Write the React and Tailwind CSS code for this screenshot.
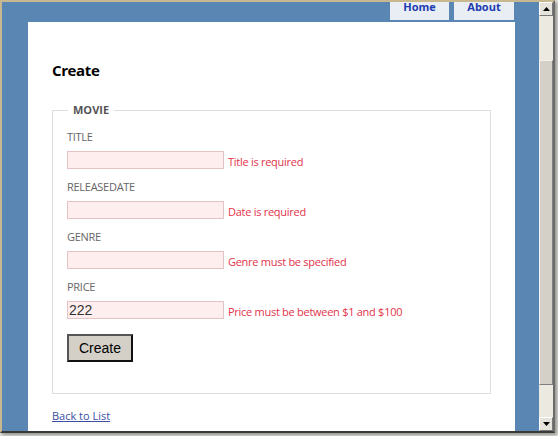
import React from 'react';

const font = { fontFamily: '"Open Sans", "DejaVu Sans", sans-serif' };

function Field({ label, value, error }) {
  return (
    <div className="mb-[11px]">
      <div className="text-[11px] leading-[14px] text-[#666] tracking-tight">{label}</div>
      <div className="mt-[7px] flex items-center">
        <input
          readOnly
          value={value || ''}
          className="w-[157px] h-[18px] border border-[#e3c3c3] bg-[#ffeeee] px-[1px] text-[14px] leading-[16px] text-[#333] outline-none"
          style={{ fontFamily: '"Liberation Sans", Arial, sans-serif' }}
        />
        <span className="ml-[4px] mt-[3px] text-[11px] leading-[14px] font-medium text-[#e2334a] tracking-tight">{error}</span>
      </div>
    </div>
  );
}

export default function App() {
  return (
    <div className="w-[558px] h-[436px] bg-[#e4e2dd] overflow-hidden" style={font}>
      <div className="w-[555px] h-[433px] flex border-t-2 border-l-2 border-[#c7b88f] border-r-2 border-r-[#6b6b6b] border-b-2 border-b-[#3a3a3a] shadow-[2px_2px_3px_rgba(0,0,0,0.35)]">
        {/* page */}
        <div className="flex-1 bg-[#5a86b4] pl-[26px] pr-[24px] flex flex-col">
          <div className="h-[20px] flex justify-end gap-[5px]">
            <div className="w-[59px] h-[18px] bg-[#e8eef4] text-[#1d3bb0] text-[11px] font-bold flex items-start justify-center leading-[9px]">Home</div>
            <div className="w-[60px] h-[18px] bg-[#e8eef4] text-[#1d3bb0] text-[11px] font-bold flex items-start justify-center leading-[9px] mr-[1px]">About</div>
          </div>
          <div className="flex-1 bg-white pl-[24px] pr-[24px] pt-[39px]">
            <h2 className="text-[15px] font-bold text-black leading-[18px] tracking-tight">Create</h2>
            <fieldset className="mt-[24px] border border-[#dedede] pl-[14px] pr-[14px] pb-[31px] pt-[2px]">
              <legend className="ml-[1px] px-[5px] text-[11px] font-bold text-[#555] leading-[14px]">MOVIE</legend>
              <div className="pt-[11px]">
                <Field label="TITLE" error="Title is required" />
                <Field label="RELEASEDATE" error="Date is required" />
                <Field label="GENRE" error="Genre must be specified" />
                <Field label="PRICE" value="222" error="Price must be between $1 and $100" />
                <button
                  className="mt-[4px] w-[66px] h-[28px] bg-[#d4d0c8] text-[14px] text-black border-2 border-t-[#555] border-l-[#555] border-r-[#111] border-b-[#111]"
                  style={{ fontFamily: '"Liberation Sans", Arial, sans-serif' }}
                >
                  Create
                </button>
              </div>
            </fieldset>
            <a className="block mt-[15px] text-[11px] text-[#3b4ea3] underline leading-[14px]">Back to List</a>
          </div>
        </div>
        {/* scrollbar */}
        <div className="w-[14px] bg-[#ece9e1] flex flex-col">
          <div className="h-[14px] bg-[#e6e3dc] border border-t-white border-l-white border-r-[#777] border-b-[#777] flex items-center justify-center">
            <svg width="7" height="4" viewBox="0 0 7 4"><path d="M3.5 0L7 4H0z" fill="#000" /></svg>
          </div>
          <div className="h-[44px]" />
          <div className="h-[325px] bg-[#d4d0c8] border border-t-[#f4f2ee] border-l-[#f4f2ee] border-r-[#808080] border-b-[#808080]" />
          <div className="flex-1" />
          <div className="h-[14px] bg-[#e6e3dc] border border-t-white border-l-white border-r-[#777] border-b-[#777] flex items-center justify-center">
            <svg width="7" height="4" viewBox="0 0 7 4"><path d="M0 0H7L3.5 4z" fill="#000" /></svg>
          </div>
        </div>
      </div>
    </div>
  );
}
